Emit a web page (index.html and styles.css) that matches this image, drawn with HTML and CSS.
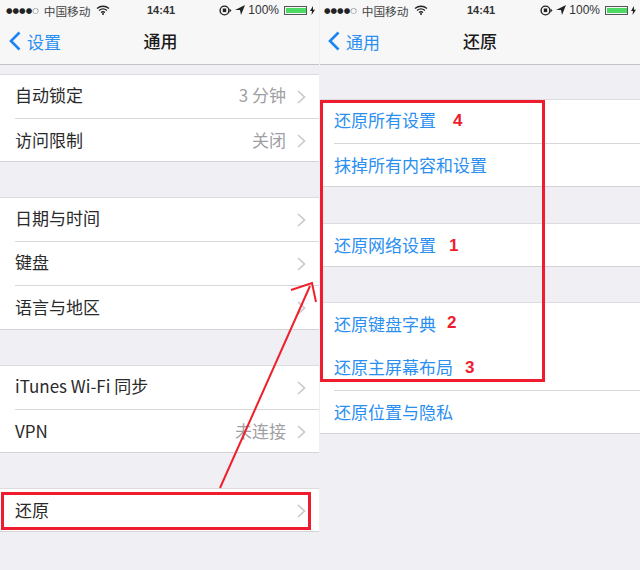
FILE: index.html
```html
<!DOCTYPE html>
<html lang="zh">
<head>
<meta charset="utf-8">
<title>通用 / 还原</title>
<link rel="stylesheet" href="styles.css">
</head>
<body>
<div class="stage">
  <section class="phone">
    <div class="status">
      <div class="st-left"><span class="dots">●●●●<i>○</i></span><span class="carrier">中国移动</span>
        <svg class="wifi" width="14" height="10" viewBox="0 0 14 10"><path d="M1 3.5C4.5.5 9.5.5 13 3.5M3 5.6c2.4-2 5.6-2 8 0M5 7.5c1.2-.9 2.8-.9 4 0" fill="none" stroke="#222" stroke-width="1.3"/><circle cx="7" cy="9" r="1" fill="#222"/></svg></div>
      <div class="time">14:41</div>
      <div class="st-right">
        <svg width="13" height="11" viewBox="0 0 13 11"><circle cx="5.5" cy="5.5" r="4.4" fill="none" stroke="#222" stroke-width="1.4"/><rect x="3.8" y="3.5" width="3.4" height="3.6" fill="#222"/><path d="M10.5 3.5l2 2-2 2z" fill="#222"/></svg>
        <svg class="loc" width="10" height="10" viewBox="0 0 10 10"><path d="M0 5L10 0 6 10 5 5z" fill="#222"/></svg>
        <span class="pct">100%</span>
        <span class="bat"><b></b></span>
        <svg width="5" height="9" viewBox="0 0 5 9"><path d="M3 0L0 5h2L1.500 9 5 3.800H3z" fill="#222"/></svg>
      </div>
    </div>
    <header class="nav">
      <div class="back">
        <svg width="12" height="20" viewBox="0 0 12 20"><path d="M10.500 1.500L2 10l8.500 8.500" fill="none" stroke="#1a84f5" stroke-width="2.600"/></svg>
        <span>设置</span>
      </div>
      <h1>通用</h1>
    </header>
    <div class="list left-list">
      <ul class="group g1">
        <li><span>自动锁定</span><em>3 分钟</em><svg class="chev" width="9" height="14" viewBox="0 0 9 14"><path d="M1 1l6.500 6L1 13" fill="none" stroke="#c7c7cc" stroke-width="1.600"/></svg></li>
        <li><span>访问限制</span><em>关闭</em><svg class="chev" width="9" height="14" viewBox="0 0 9 14"><path d="M1 1l6.500 6L1 13" fill="none" stroke="#c7c7cc" stroke-width="1.600"/></svg></li>
      </ul>
      <ul class="group g2">
        <li><span>日期与时间</span><svg class="chev" width="9" height="14" viewBox="0 0 9 14"><path d="M1 1l6.500 6L1 13" fill="none" stroke="#c7c7cc" stroke-width="1.600"/></svg></li>
        <li><span>键盘</span><svg class="chev" width="9" height="14" viewBox="0 0 9 14"><path d="M1 1l6.500 6L1 13" fill="none" stroke="#c7c7cc" stroke-width="1.600"/></svg></li>
        <li><span>语言与地区</span><svg class="chev" width="9" height="14" viewBox="0 0 9 14"><path d="M1 1l6.500 6L1 13" fill="none" stroke="#c7c7cc" stroke-width="1.600"/></svg></li>
      </ul>
      <ul class="group g3">
        <li><span>iTunes Wi-Fi 同步</span><svg class="chev" width="9" height="14" viewBox="0 0 9 14"><path d="M1 1l6.500 6L1 13" fill="none" stroke="#c7c7cc" stroke-width="1.600"/></svg></li>
        <li><span>VPN</span><em>未连接</em><svg class="chev" width="9" height="14" viewBox="0 0 9 14"><path d="M1 1l6.500 6L1 13" fill="none" stroke="#c7c7cc" stroke-width="1.600"/></svg></li>
      </ul>
      <ul class="group g4">
        <li><span>还原</span><svg class="chev" width="9" height="14" viewBox="0 0 9 14"><path d="M1 1l6.500 6L1 13" fill="none" stroke="#c7c7cc" stroke-width="1.600"/></svg></li>
      </ul>
    </div>
  </section>
  <section class="phone right">
    <div class="status">
      <div class="st-left"><span class="dots">●●●●<i>○</i></span><span class="carrier">中国移动</span>
        <svg class="wifi" width="14" height="10" viewBox="0 0 14 10"><path d="M1 3.5C4.5.5 9.5.5 13 3.5M3 5.6c2.4-2 5.6-2 8 0M5 7.5c1.2-.9 2.8-.9 4 0" fill="none" stroke="#222" stroke-width="1.3"/><circle cx="7" cy="9" r="1" fill="#222"/></svg></div>
      <div class="time">14:41</div>
      <div class="st-right">
        <svg width="13" height="11" viewBox="0 0 13 11"><circle cx="5.5" cy="5.5" r="4.4" fill="none" stroke="#222" stroke-width="1.4"/><rect x="3.8" y="3.5" width="3.4" height="3.6" fill="#222"/><path d="M10.5 3.5l2 2-2 2z" fill="#222"/></svg>
        <svg class="loc" width="10" height="10" viewBox="0 0 10 10"><path d="M0 5L10 0 6 10 5 5z" fill="#222"/></svg>
        <span class="pct">100%</span>
        <span class="bat"><b></b></span>
        <svg width="5" height="9" viewBox="0 0 5 9"><path d="M3 0L0 5h2L1.500 9 5 3.800H3z" fill="#222"/></svg>
      </div>
    </div>
    <header class="nav">
      <div class="back">
        <svg width="12" height="20" viewBox="0 0 12 20"><path d="M10.500 1.500L2 10l8.500 8.500" fill="none" stroke="#1a84f5" stroke-width="2.600"/></svg>
        <span>通用</span>
      </div>
      <h1>还原</h1>
    </header>
    <div class="list right-list">
      <ul class="group blue r1"><li><span>还原所有设置</span></li><li><span>抹掉所有内容和设置</span></li></ul>
      <ul class="group blue r2"><li><span>还原网络设置</span></li></ul>
      <ul class="group blue r3"><li class="plain"><span>还原键盘字典</span></li><li><span>还原主屏幕布局</span></li><li><span>还原位置与隐私</span></li></ul>
    </div>
  </section>
  <div class="box box-left"></div>
  <div class="box box-right"></div>
  <span class="num n4">4</span>
  <span class="num n1">1</span>
  <span class="num n2">2</span>
  <span class="num n3">3</span>
  <svg class="arrow" width="640" height="570" viewBox="0 0 640 570"><path d="M220 488L310 286M291 290L312 283L316 302" fill="none" stroke="#f0202c" stroke-width="2"/></svg>
</div>
</body>
</html>
```
FILE: styles.css
```css
* { box-sizing: border-box; }
html, body { margin: 0; padding: 0; }
body { background: #efeff4; font-family: "Noto Sans CJK SC", "Liberation Sans", sans-serif; }
.stage { position: relative; width: 640px; height: 570px; display: flex; overflow: hidden; background: #efeff4; }
.phone { width: 320px; flex: none; }
.phone:first-child { width: 319px; margin-right: 1px; }
.status { height: 20px; padding: 0 4px 0 6px; display: flex; align-items: center; justify-content: space-between; background: #f7f7f8; font-size: 11px; color: #222; position: relative; }
.right .status { padding-left: 4px; }
.st-left, .st-right { display: flex; align-items: center; gap: 5px; }
.st-left { width: 120px; }
.st-right { width: 100px; justify-content: flex-end; gap: 3px; }
.dots { font-size: 7.500px; font-family: "DejaVu Sans", sans-serif; }
.dots i { font-style: normal; color: #666; }
.carrier { color: #444; font-size: 11.700px; }
.time { font-family: "Liberation Sans", sans-serif; font-size: 11px; font-weight: 700; color: #333; position: absolute; left: 147px; }
.pct { font-family: "Liberation Sans", sans-serif; font-size: 12px; color: #333; }
.bat { width: 23px; height: 9px; border: 1px solid #555; display: block; padding: 1px 0 1px 1px; margin-left: 2px; }
.bat b { display: block; height: 100%; background: #4cd964; }
.nav { height: 45px; padding-left: 9px; display: flex; align-items: center; position: relative; background: #f7f7f8; border-bottom: 1px solid #c4c4c6; padding-bottom: 2px; }
.right .nav { padding-left: 8px; }
.back { display: flex; align-items: center; gap: 6px; font-size: 17px; color: #2b8ff0; }
.nav h1 { position: absolute; left: 2px; right: 0; margin: 0; text-align: center; font-size: 17px; font-weight: 500; color: #1a1a1a; line-height: 1.2; }
.right .nav h1 { left: 0; }
.group { list-style: none; margin: 0; padding: 0; background: #fff; border-top: 1px solid #dcdce0; border-bottom: 1px solid #d4d4d8; }
.group li { height: 44px; margin-left: 15px; padding-right: 13px; display: flex; align-items: center; font-size: 17px; line-height: 1; color: #2a2a2a; border-bottom: 1px solid #d8d8dc; }
.group li:last-child { border-bottom: 0; }
.group li.plain { border-bottom: 0; }
.group li span { flex: 1; padding-bottom: 4px; }
.group em { font-style: normal; color: #a0a0a4; margin-right: 11px; padding-bottom: 4px; }
.blue li { color: #2b8ff0; }
.right .group li { margin-left: 14px; padding-right: 0; }
.g1 { margin-top: 9px; height: 88px; }
.g2 { margin-top: 35px; height: 133px; }
.g3 { margin-top: 35px; height: 88px; }
.g4 { margin-top: 35px; height: 44px; }
.r1 { margin-top: 34px; height: 88px; }
.r2 { margin-top: 36px; height: 44px; }
.r3 { margin-top: 35px; height: 132px; }
.box { position: absolute; border: 3px solid #ee1c2e; }
.box-left { left: 1px; top: 492px; width: 310px; height: 38px; }
.box-right { left: 320px; top: 100px; width: 225px; height: 282px; }
.num { position: absolute; font-family: "Liberation Sans", sans-serif; font-size: 17px; font-weight: 700; line-height: 1; color: #ee1c2e; }
.n4 { left: 453px; top: 112px; }
.n1 { left: 449px; top: 237px; }
.n2 { left: 447px; top: 314px; }
.n3 { left: 465px; top: 359px; }
.arrow { position: absolute; left: 0; top: 0; pointer-events: none; }
```
